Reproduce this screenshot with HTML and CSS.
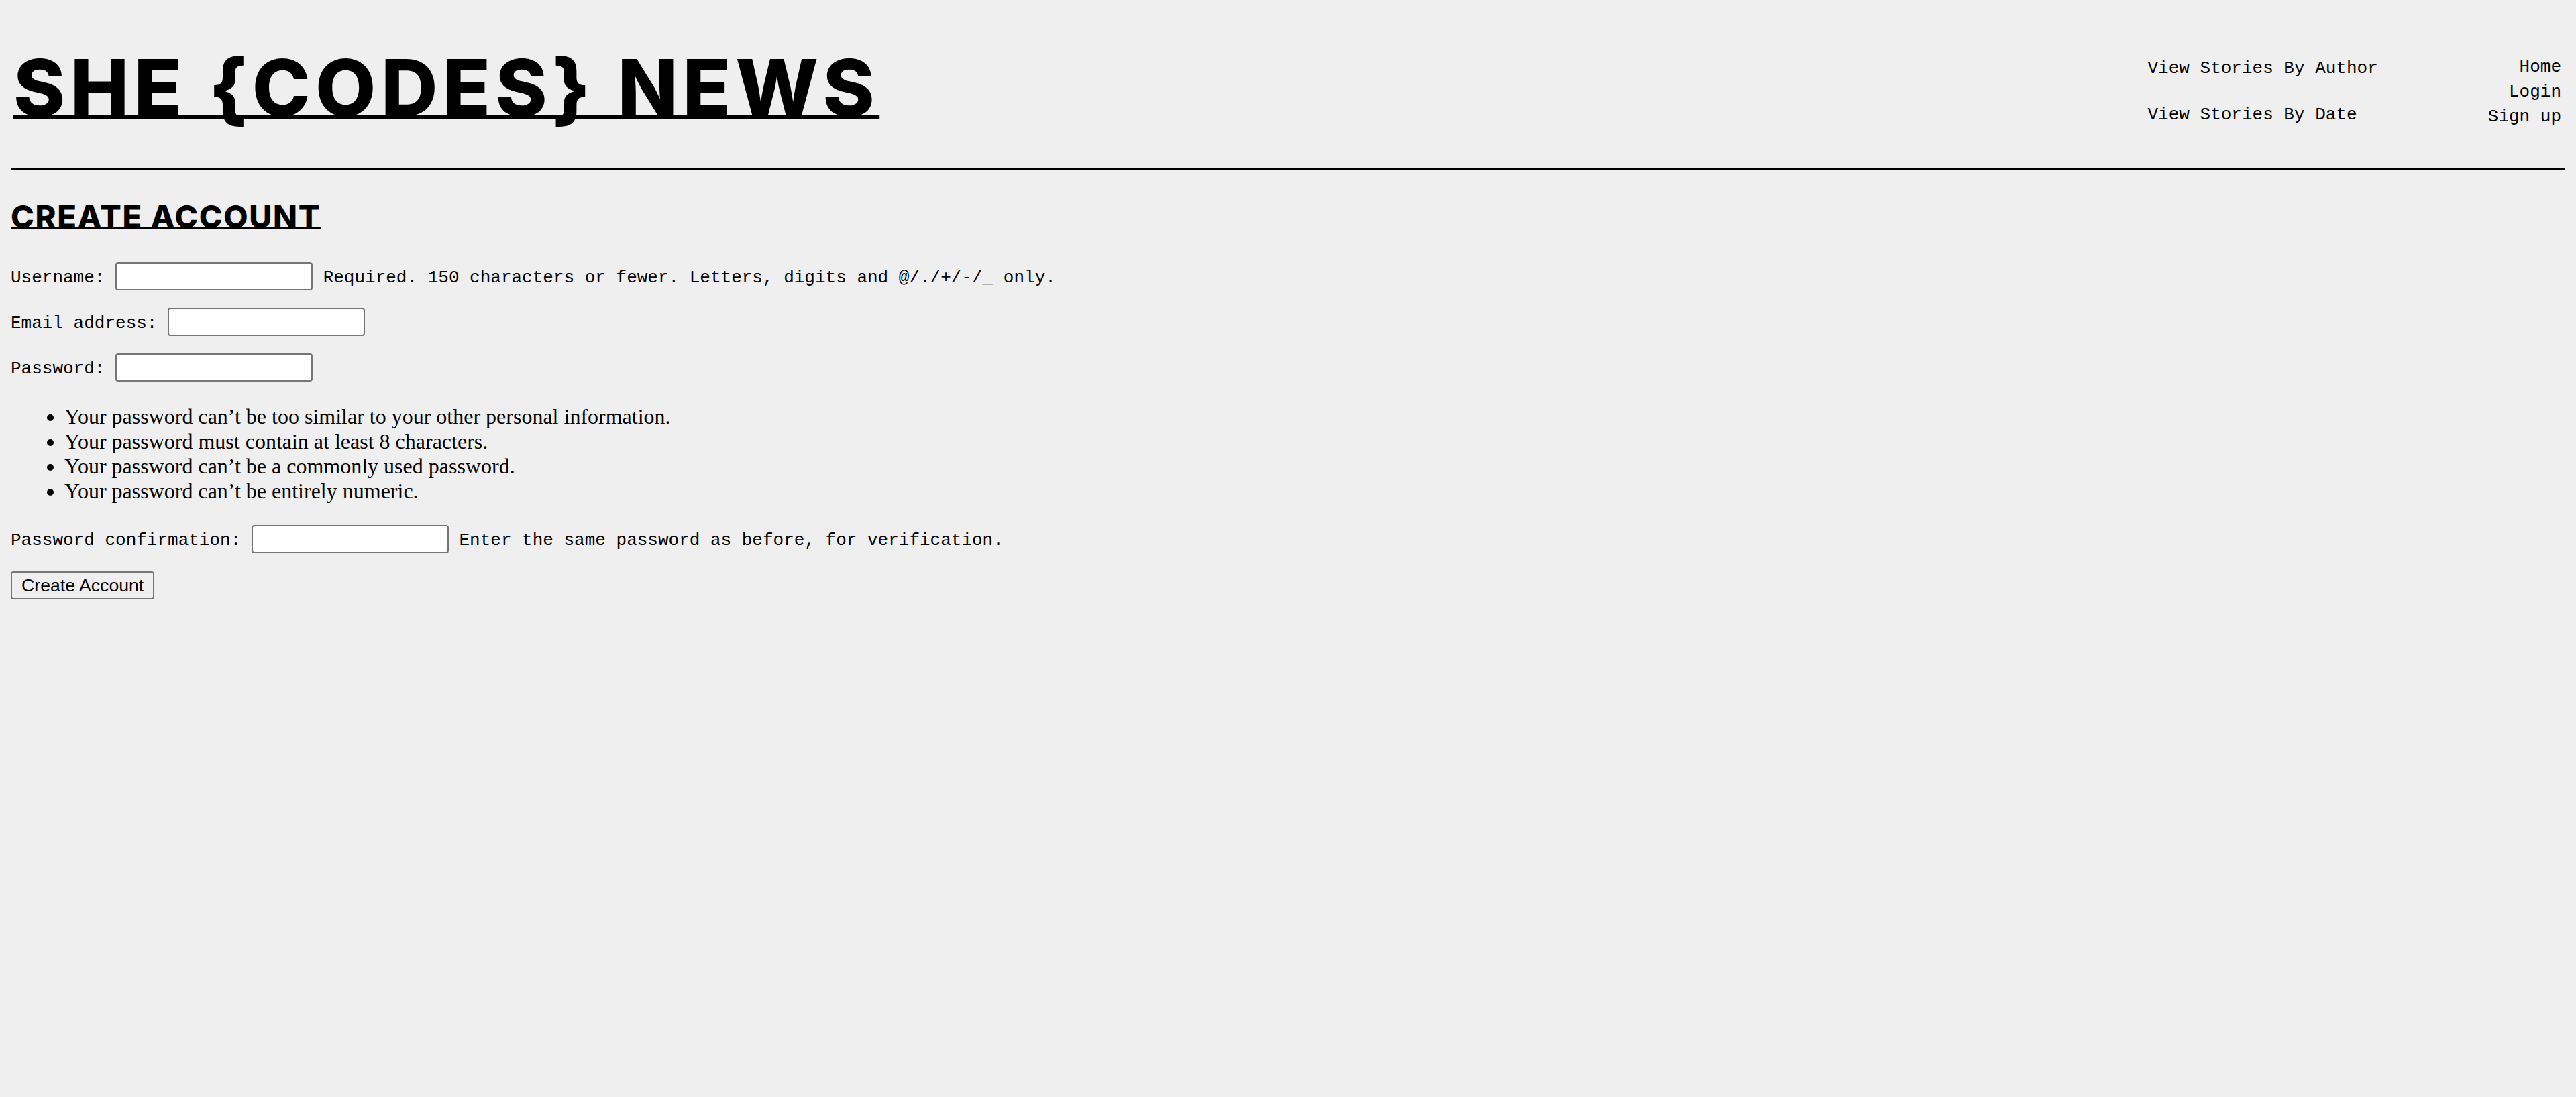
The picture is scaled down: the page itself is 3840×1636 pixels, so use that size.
FILE: index.html
```html
<!DOCTYPE html>
<html lang="en">
<head>
<meta charset="utf-8">
<title>She Codes News - Create Account</title>
<link rel="stylesheet" href="styles.css">
</head>
<body>
<header class="site-header">
  <h1 class="site-title"><a href="#" class="site-title-link">SHE {CODES} NEWS</a></h1>
  <nav class="site-nav">
    <div class="nav-col">
      <p class="nav-item"><a href="#" class="nav-link">View Stories By Author</a></p>
      <p class="nav-item"><a href="#" class="nav-link">View Stories By Date</a></p>
    </div>
    <ul class="nav-list">
      <li class="nav-list-item"><a href="#" class="nav-link">Home</a></li>
      <li class="nav-list-item"><a href="#" class="nav-link">Login</a></li>
      <li class="nav-list-item"><a href="#" class="nav-link">Sign up</a></li>
    </ul>
  </nav>
</header>
<hr class="divider">
<main class="content">
  <h2 class="page-title">CREATE ACCOUNT</h2>
  <form class="signup-form">
    <p class="field"><label class="field-label">Username:</label> <input class="field-input" type="text"> <span class="helptext">Required. 150 characters or fewer. Letters, digits and @/./+/-/_ only.</span></p>
    <p class="field"><label class="field-label">Email address:</label> <input class="field-input" type="email"></p>
    <p class="field"><label class="field-label">Password:</label> <input class="field-input" type="password"></p>
    <ul class="help-list">
      <li>Your password can’t be too similar to your other personal information.</li>
      <li>Your password must contain at least 8 characters.</li>
      <li>Your password can’t be a commonly used password.</li>
      <li>Your password can’t be entirely numeric.</li>
    </ul>
    <p class="field"><label class="field-label">Password confirmation:</label> <input class="field-input" type="password"> <span class="helptext">Enter the same password as before, for verification.</span></p>
    <p class="field submit-row"><button class="submit-btn" type="submit">Create Account</button></p>
  </form>
</main>
</body>
</html>
```
FILE: styles.css
```css
html {
  background: #efefef;
}
body {
  margin: 16px;
  background: #efefef;
  color: #000;
  font-family: "Liberation Serif", "Times New Roman", serif;
  font-size: 32px;
}
a {
  color: #000;
}

.site-header {
  display: flex;
  justify-content: space-between;
  align-items: flex-start;
}
.site-title {
  margin: 56px 0 0 0;
  padding-left: 4px;
  font-family: "Inter", "Liberation Sans", sans-serif;
  font-weight: 800;
  font-size: 117px;
  line-height: 1;
  letter-spacing: 7.4px;
}
.site-title-link {
  text-decoration: underline;
  text-decoration-thickness: 6px;
  text-underline-offset: -2px;
  text-decoration-skip-ink: none;
}

.site-nav {
  display: flex;
  gap: 164px;
  margin-right: 6px;
}
.nav-col {
  display: flex;
  flex-direction: column;
  gap: 32px;
  margin-top: 64px;
}
.nav-item {
  margin: 0;
  line-height: 37px;
}
.nav-list {
  list-style: none;
  margin: 62px 0 0 0;
  padding: 0;
  text-align: right;
}
.nav-list-item {
  line-height: 37px;
}
.nav-link {
  font-family: "Liberation Mono", "Courier New", monospace;
  font-size: 26px;
  line-height: 1;
  text-decoration: none;
}

.divider {
  margin: 62px 0 0 0;
  border: none;
  border-top: 3px solid #000;
  height: 0;
}

.page-title {
  margin: 40px 0 40px 0;
  font-family: "Inter", "Liberation Sans", sans-serif;
  font-weight: 800;
  font-size: 47px;
  letter-spacing: 1.6px;
  text-decoration: underline;
  text-decoration-thickness: 3px;
  text-underline-offset: -1px;
  text-decoration-skip-ink: none;
}

.signup-form {
  margin: 0;
}
.field {
  margin: 26px 0;
  font-family: "Liberation Mono", "Courier New", monospace;
  font-size: 26px;
}
.field-input {
  box-sizing: border-box;
  width: 294px;
  height: 42px;
  padding: 2px 4px;
  border: 2px solid #767676;
  border-radius: 4px;
  background: #fff;
  font-family: "Liberation Sans", Arial, sans-serif;
  font-size: 26px;
  vertical-align: baseline;
}
.help-list {
  margin: 34px 0 32px 0;
  padding-left: 80px;
  font-family: "Liberation Serif", "Times New Roman", serif;
  font-size: 32px;
  line-height: 37px;
}
.submit-row {
  margin-top: 27px;
}
.submit-btn {
  box-sizing: border-box;
  height: 42px;
  padding: 0 14px;
  border: 2px solid #767676;
  border-radius: 4px;
  background: #efefef;
  color: #000;
  font-family: "Liberation Sans", Arial, sans-serif;
  font-size: 26.67px;
}
```
